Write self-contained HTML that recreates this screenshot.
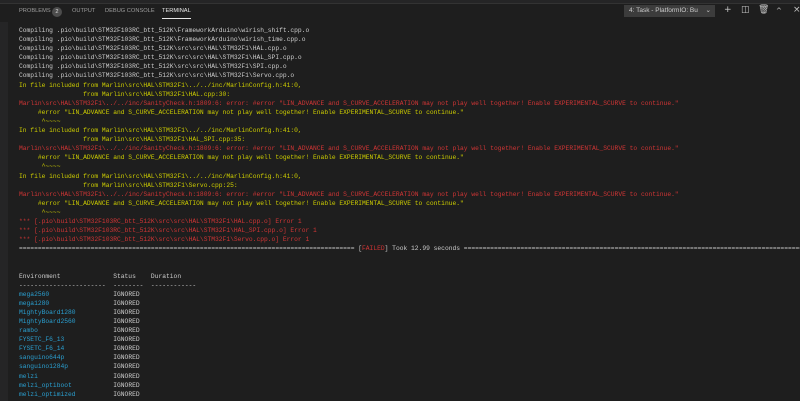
<!DOCTYPE html>
<html><head><style>
html,body{margin:0;padding:0;background:#1e1e1e;width:800px;height:401px;overflow:hidden}
.top{position:absolute;left:0;top:0;width:800px;height:3px;background:#252526;border-bottom:1px solid #333}
.tabs{position:absolute;top:7px;left:0;font:5.7px "Liberation Sans",sans-serif;color:#9d9d9d}
.tabs span{position:absolute;white-space:nowrap;line-height:9px}
.badge{background:#4d4d4d;color:#ddd;border-radius:5px;width:10px;height:10px;text-align:center;line-height:10px!important;top:-0.5px}
.dd{position:absolute;left:624px;top:5px;width:91px;height:12px;background:#3c3c3c;color:#ccc;font:6.5px "Liberation Sans",sans-serif;line-height:12px;padding-left:5px;box-sizing:border-box}
.ic{position:absolute;top:5px;color:#c5c5c5;font:9px "DejaVu Sans",sans-serif}
.wrap{position:absolute;left:0;top:0;width:800px;height:401px;overflow:hidden}
pre{position:absolute;left:19px;top:26px;margin:0;font:6.29px/9.1px "Liberation Mono",monospace;color:#cccccc;white-space:pre}
.y{color:#cdcd00}.r{color:#d03535}.b{color:#2a9fd0}
.side{position:absolute;left:0;top:22px;width:8px;height:379px;background:#252526}
</style></head><body>
<div class="wrap">
<div class="top"></div>
<div class="side"></div>
<div class="tabs">
<span style="left:19px;top:0">PROBLEMS</span>
<span class="badge" style="left:52px">2</span>
<span style="left:72px;top:0">OUTPUT</span>
<span style="left:105px;top:0">DEBUG CONSOLE</span>
<span style="left:162px;top:0;color:#e7e7e7">TERMINAL</span>
</div>
<div style="position:absolute;left:162px;top:18px;width:29px;height:1px;background:#e7e7e7"></div>
<div class="dd">4: Task - PlatformIO: Bu <span style="float:right;margin-right:4px">⌄</span></div>
<span class="ic" style="left:724px">+</span>
<span class="ic" style="left:741px">◫</span>
<span class="ic" style="left:758px">🗑</span>
<span class="ic" style="left:776px;font-size:7px;top:7px">^</span>
<span class="ic" style="left:793px">×</span>
<pre>Compiling .pio\build\STM32F103RC_btt_512K\FrameworkArduino\wirish_shift.cpp.o
Compiling .pio\build\STM32F103RC_btt_512K\FrameworkArduino\wirish_time.cpp.o
Compiling .pio\build\STM32F103RC_btt_512K\src\src\HAL\STM32F1\HAL.cpp.o
Compiling .pio\build\STM32F103RC_btt_512K\src\src\HAL\STM32F1\HAL_SPI.cpp.o
Compiling .pio\build\STM32F103RC_btt_512K\src\src\HAL\STM32F1\SPI.cpp.o
Compiling .pio\build\STM32F103RC_btt_512K\src\src\HAL\STM32F1\Servo.cpp.o
<span class="y">In file included from Marlin\src\HAL\STM32F1\../../inc/MarlinConfig.h:41:0,
                 from Marlin\src\HAL\STM32F1\HAL.cpp:30:</span>
<span class="r">Marlin\src\HAL\STM32F1\../../inc/SanityCheck.h:1809:6: error: #error "LIN_ADVANCE and S_CURVE_ACCELERATION may not play well together! Enable EXPERIMENTAL_SCURVE to continue."</span>
<span class="y">     #error "LIN_ADVANCE and S_CURVE_ACCELERATION may not play well together! Enable EXPERIMENTAL_SCURVE to continue."
      ^~~~~
In file included from Marlin\src\HAL\STM32F1\../../inc/MarlinConfig.h:41:0,
                 from Marlin\src\HAL\STM32F1\HAL_SPI.cpp:35:</span>
<span class="r">Marlin\src\HAL\STM32F1\../../inc/SanityCheck.h:1809:6: error: #error "LIN_ADVANCE and S_CURVE_ACCELERATION may not play well together! Enable EXPERIMENTAL_SCURVE to continue."</span>
<span class="y">     #error "LIN_ADVANCE and S_CURVE_ACCELERATION may not play well together! Enable EXPERIMENTAL_SCURVE to continue."
      ^~~~~
In file included from Marlin\src\HAL\STM32F1\../../inc/MarlinConfig.h:41:0,
                 from Marlin\src\HAL\STM32F1\Servo.cpp:25:</span>
<span class="r">Marlin\src\HAL\STM32F1\../../inc/SanityCheck.h:1809:6: error: #error "LIN_ADVANCE and S_CURVE_ACCELERATION may not play well together! Enable EXPERIMENTAL_SCURVE to continue."</span>
<span class="y">     #error "LIN_ADVANCE and S_CURVE_ACCELERATION may not play well together! Enable EXPERIMENTAL_SCURVE to continue."
      ^~~~~</span>
<span class="r">*** [.pio\build\STM32F103RC_btt_512K\src\src\HAL\STM32F1\HAL.cpp.o] Error 1
*** [.pio\build\STM32F103RC_btt_512K\src\src\HAL\STM32F1\HAL_SPI.cpp.o] Error 1
*** [.pio\build\STM32F103RC_btt_512K\src\src\HAL\STM32F1\Servo.cpp.o] Error 1</span>
========================================================================================= [<span class="r">FAILED</span>] Took 12.99 seconds ====================================================================================================


Environment              Status    Duration
-----------------------  --------  ------------
<span class="b">mega2560</span>                 IGNORED
<span class="b">mega1280</span>                 IGNORED
<span class="b">MightyBoard1280</span>          IGNORED
<span class="b">MightyBoard2560</span>          IGNORED
<span class="b">rambo</span>                    IGNORED
<span class="b">FYSETC_F6_13</span>             IGNORED
<span class="b">FYSETC_F6_14</span>             IGNORED
<span class="b">sanguino644p</span>             IGNORED
<span class="b">sanguino1284p</span>            IGNORED
<span class="b">melzi</span>                    IGNORED
<span class="b">melzi_optiboot</span>           IGNORED
<span class="b">melzi_optimized</span>          IGNORED
</pre>
</div>
</body></html>
